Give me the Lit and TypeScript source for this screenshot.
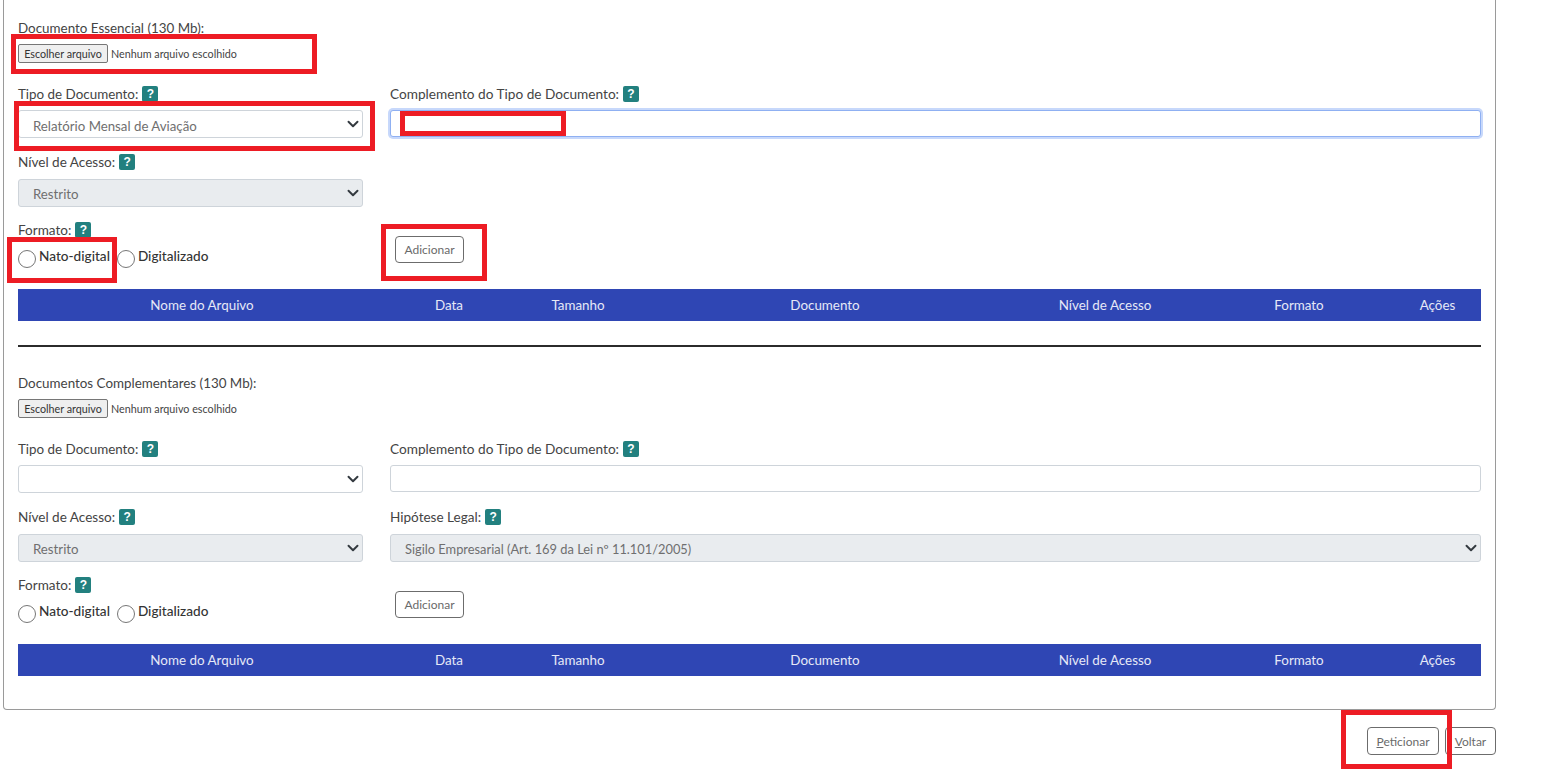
import { LitElement, html, css, nothing } from "lit";
import { customElement, property } from "lit/decorators.js";

const CHEVRON =
  "url(\"data:image/svg+xml,%3csvg xmlns='http://www.w3.org/2000/svg' viewBox='0 0 16 16'%3e%3cpath fill='none' stroke='%23343a40' stroke-linecap='round' stroke-linejoin='round' stroke-width='2.6' d='M2 5l6 6 6-6'/%3e%3c/svg%3e\")";

@customElement("doc-section")
class DocSection extends LitElement {
  @property() heading = "";
  @property() tipo = "";
  @property({ type: Boolean }) focused = false;
  @property({ type: Boolean }) hipotese = false;

  static styles = css`
    :host { display: block; font-family: "Lato", "Open Sans", sans-serif; font-size: 13.55px; color: #444; }
    .line { height: 20px; display: flex; align-items: center; gap: 4px; white-space: nowrap; }
    .heading { font-size: 13.4px; }
    .wide { font-size: 13.65px; }
    .help {
      width: 16px; height: 16px; border-radius: 2px; background: #22807f; color: #fff;
      font: bold 12px/16px "Liberation Sans", sans-serif; text-align: center;
    }
    .file { display: flex; align-items: center; margin-top: 6px; height: 19px; font-size: 10.75px; color: #444; }
    .file button {
      width: 90px; height: 19px; padding: 0; margin-right: 3px; border: 1px solid #767676; border-radius: 2px;
      background: #efefef; color: #333; font: inherit;
    }
    .grid { display: grid; grid-template-columns: 345px 1091px; column-gap: 27px; margin-top: 21px; }
    .field { display: grid; row-gap: 6px; align-content: start; }
    .second { margin-top: 14px; }
    .second .line { margin-bottom: 1px; }
    .third { margin-top: 13px; }
    select, .text {
      box-sizing: border-box; width: 100%; margin: 0; border: 1px solid #ced4da; border-radius: 3px;
      background-color: #fff; color: #6f6f6f; font: inherit; font-size: 13.25px; outline: none;
    }
    select {
      height: 28px; padding: 3px 30px 0 14px; appearance: none;
      background-image: ${css([CHEVRON] as any)};
      background-repeat: no-repeat; background-position: right 3px center; background-size: 12px 12px;
    }
    select:disabled { background-color: #e9ecef; opacity: 1; color: #6f6f6f; padding-top: 1px; }
    select.legal { font-size: 12.85px; }
    .text { height: 27px; padding: 0 14px; }
    .text.focus { border-color: #8fb0f2; box-shadow: 0 0 0 2px #c7d8fb; }
    .radios { display: flex; align-items: flex-start; height: 20px; margin-top: 9px; font-weight: 500; font-size: 13.6px; color: #333; }
    .radios label { display: flex; align-items: flex-start; margin-right: 7px; line-height: 15px; }
    .radios input { width: 18px; height: 18px; margin: 1px 3px 0 0; }
    .btn {
      box-sizing: border-box; height: 27px; width: 69px; margin: 16px 0 0 5px; padding: 0;
      background: #fff; border: 1px solid #6c6c6c; border-radius: 4px; color: #6a6a6a; font: inherit; font-size: 12px;
    }
    table { width: 1463px; height: 32px; margin-top: 20px; border-collapse: collapse; table-layout: fixed; }
    th { background: #2f46b4; color: #e6e9f7; font-weight: 400; font-size: 13.4px; padding: 0; text-align: center; }
    .c1 { width: 368px; } .c2 { width: 126px; } .c3 { width: 132px; } .c4 { width: 362px; }
    .c5 { width: 198px; } .c6 { width: 190px; } .c7 { width: 87px; }
  `;

  private help() {
    return html`<span class="help">?</span>`;
  }

  render() {
    return html`
      <div class="line heading">${this.heading}</div>
      <div class="file"><button type="button">Escolher arquivo</button><span>Nenhum arquivo escolhido</span></div>

      <div class="grid">
        <div class="field">
          <div class="line heading">Tipo de Documento: ${this.help()}</div>
          <select><option>${this.tipo}</option></select>
        </div>
        <div class="field">
          <div class="line wide">Complemento do Tipo de Documento: ${this.help()}</div>
          <input class="text ${this.focused ? "focus" : ""}" type="text" />
        </div>

        <div class="field second">
          <div class="line">Nível de Acesso: ${this.help()}</div>
          <select disabled><option>Restrito</option></select>
        </div>
        <div class="field second">
          ${this.hipotese
            ? html`<div class="line">Hipótese Legal: ${this.help()}</div>
                <select class="legal" disabled><option>Sigilo Empresarial (Art. 169 da Lei nº 11.101/2005)</option></select>`
            : nothing}
        </div>

        <div class="third">
          <div class="line">Formato: ${this.help()}</div>
          <div class="radios">
            <label><input type="radio" name="f" />Nato-digital</label>
            <label><input type="radio" name="f" />Digitalizado</label>
          </div>
        </div>
        <div class="third"><button class="btn" type="button">Adicionar</button></div>
      </div>

      <table>
        <thead>
          <tr>
            <th class="c1">Nome do Arquivo</th>
            <th class="c2">Data</th>
            <th class="c3">Tamanho</th>
            <th class="c4">Documento</th>
            <th class="c5">Nível de Acesso</th>
            <th class="c6">Formato</th>
            <th class="c7">Ações</th>
          </tr>
        </thead>
      </table>
    `;
  }
}

@customElement("app-root")
class AppRoot extends LitElement {
  static styles = css`
    :host { display: block; position: relative; height: 783px; overflow: hidden; background: #fff; font-family: "Lato", "Open Sans", sans-serif; }
    .box {
      box-sizing: border-box; width: 1493px; margin-left: 3px; padding: 18px 14px 33px;
      border: 1px solid #9a9a9a; border-top: 0; border-radius: 0 0 4px 4px;
    }
    hr { height: 2px; margin: 24px 0 26px; border: 0; background: #2b2b2b; }
    .actions { width: 1493px; margin: 17px 0 0 3px; display: flex; justify-content: flex-end; gap: 6px; }
    .actions button {
      box-sizing: border-box; height: 28px; padding: 0; background: #fff; border: 1px solid #6c6c6c; border-radius: 4px;
      color: #6a6a6a; font: 12px "Lato", "Open Sans", sans-serif;
    }
    .pet { width: 72px; }
    .vol { width: 51px; }
    u { text-decoration: underline; }
    .mark { position: absolute; box-sizing: border-box; border: 5px solid #ed1c24; pointer-events: none; }
    .m1 { left: 11px; top: 34px; width: 306px; height: 40px; }
    .m2 { left: 14px; top: 101px; width: 361px; height: 50px; }
    .m3 { left: 400px; top: 111px; width: 166px; height: 25px; }
    .m4 { left: 7px; top: 237px; width: 110px; height: 46px; }
    .m5 { left: 381px; top: 224px; width: 106px; height: 57px; }
    .m6 { left: 1341px; top: 710px; width: 111px; height: 59px; }
  `;

  render() {
    return html`
      <div class="box">
        <doc-section heading="Documento Essencial (130 Mb):" tipo="Relatório Mensal de Aviação" focused></doc-section>
        <hr />
        <doc-section heading="Documentos Complementares (130 Mb):" hipotese></doc-section>
      </div>
      <div class="actions">
        <button class="pet" type="button"><u>P</u>eticionar</button>
        <button class="vol" type="button"><u>V</u>oltar</button>
      </div>
      <div class="mark m1"></div>
      <div class="mark m2"></div>
      <div class="mark m3"></div>
      <div class="mark m4"></div>
      <div class="mark m5"></div>
      <div class="mark m6"></div>
    `;
  }
}
